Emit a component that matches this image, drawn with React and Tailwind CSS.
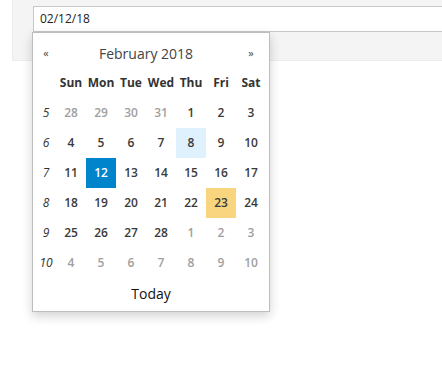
import React from 'react';

const weeks = [
  { num: 5, days: [[28, true], [29, true], [30, true], [31, true], [1], [2], [3]] },
  { num: 6, days: [[4], [5], [6], [7], [8], [9], [10]] },
  { num: 7, days: [[11], [12], [13], [14], [15], [16], [17]] },
  { num: 8, days: [[18], [19], [20], [21], [22], [23], [24]] },
  { num: 9, days: [[25], [26], [27], [28], [1, true], [2, true], [3, true]] },
  { num: 10, days: [[4, true], [5, true], [6, true], [7, true], [8, true], [9, true], [10, true]] },
];

const dow = ['Sun', 'Mon', 'Tue', 'Wed', 'Thu', 'Fri', 'Sat'];

const DayCell = ({ day, old, weekIdx }) => {
  let cls = 'text-[#3a3a3a]';
  if (old) cls = 'text-[#a0a0a0]';
  if (weekIdx === 1 && day === 8) cls = 'bg-[#def1fd] text-[#3a3a3a]';
  if (weekIdx === 2 && day === 12) cls = 'bg-[#0085cc] text-white font-bold';
  if (weekIdx === 3 && day === 23) cls = 'bg-[#f8d57e] text-[#3a3a3a]';
  return (
    <div className={`h-[30px] flex items-center justify-center text-[12px] font-semibold ${cls}`}>
      {day}
    </div>
  );
};

const App = () => {
  return (
    <div className="relative w-[442px] h-[372px] bg-white overflow-hidden" style={{ fontFamily: '"Open Sans", "Noto Sans", sans-serif' }}>
      <div className="ml-[12px] h-[61px] bg-[#f4f4f4] pt-[6px] pl-[20px] border-b border-l border-[#ececec]">
        <div className="h-[26px] w-[440px] bg-white border border-[#c8c8c8] flex items-center px-[6px] text-[12px] text-[#222]">
          02/12/18
        </div>
      </div>

      <div className="absolute left-[32px] top-[32px] w-[238px] bg-white border border-[#bdbdbd] shadow-[0_4px_10px_rgba(0,0,0,0.18)] pt-[5px] pb-[3px] px-[3px]">
        <div className="grid grid-cols-[20px_repeat(7,30px)]">
          <div className="h-[30px] flex items-center justify-center text-[11px] text-[#444]">«</div>
          <div className="col-span-6 h-[30px] flex items-center justify-center text-[14px] text-[#444]">
            February 2018
          </div>
          <div className="h-[30px] flex items-center justify-center text-[11px] text-[#444]">»</div>

          <div className="h-[30px]"></div>
          {dow.map((d) => (
            <div key={d} className="h-[30px] flex items-center justify-center text-[12px] font-bold text-[#333]">
              {d}
            </div>
          ))}

          {weeks.map((w, wi) => (
            <React.Fragment key={w.num}>
              <div className="h-[30px] flex items-center justify-center text-[12px] italic text-[#333]">
                {w.num}
              </div>
              {w.days.map(([day, old], di) => (
                <DayCell key={di} day={day} old={old} weekIdx={wi} />
              ))}
            </React.Fragment>
          ))}

          <div className="col-span-8 h-[30px] flex items-center justify-center text-[14px] text-[#111]">
            Today
          </div>
        </div>
      </div>
    </div>
  );
};

export default App;
